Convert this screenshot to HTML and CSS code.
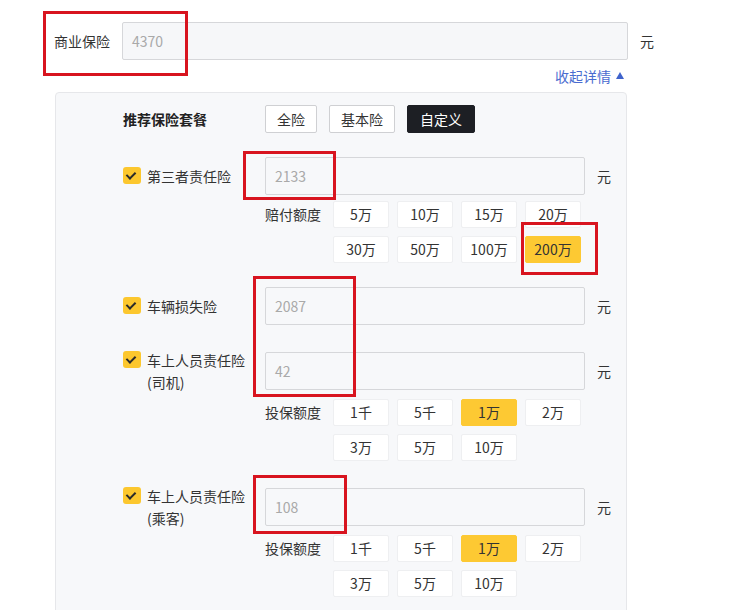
FILE: index.html
```html
<!DOCTYPE html>
<html lang="zh-CN">
<head>
<meta charset="utf-8">
<title>商业保险</title>
<link rel="stylesheet" href="styles.css">
</head>
<body>
<div class="page">
  <div class="top-row">
    <span class="top-label">商业保险</span>
    <div class="field top-field">4370</div>
    <span class="unit">元</span>
  </div>
  <div class="collapse-row">
    <a class="collapse">收起详情<span class="tri"></span></a>
  </div>
  <div class="panel">
    <div class="head-row">
      <span class="head-title">推荐保险套餐</span>
      <div class="plans">
        <span class="plan">全险</span>
        <span class="plan">基本险</span>
        <span class="plan plan-active">自定义</span>
      </div>
    </div>

    <div class="item">
      <div class="item-row">
        <div class="item-label"><span class="check"></span><span class="label-text">第三者责任险</span></div>
        <div class="field item-field">2133</div>
        <span class="unit">元</span>
      </div>
      <div class="amounts">
        <span class="amount-label">赔付额度</span>
        <div class="amount-grid">
          <span class="amt">5万</span><span class="amt">10万</span><span class="amt">15万</span><span class="amt">20万</span>
          <span class="amt">30万</span><span class="amt">50万</span><span class="amt">100万</span><span class="amt amt-active">200万</span>
        </div>
      </div>
    </div>

    <div class="item">
      <div class="item-row">
        <div class="item-label"><span class="check"></span><span class="label-text">车辆损失险</span></div>
        <div class="field item-field">2087</div>
        <span class="unit">元</span>
      </div>
    </div>

    <div class="item">
      <div class="item-row">
        <div class="item-label"><span class="check"></span><span class="label-text">车上人员责任险<br>(司机)</span></div>
        <div class="field item-field">42</div>
        <span class="unit">元</span>
      </div>
      <div class="amounts">
        <span class="amount-label">投保额度</span>
        <div class="amount-grid">
          <span class="amt">1千</span><span class="amt">5千</span><span class="amt amt-active">1万</span><span class="amt">2万</span>
          <span class="amt">3万</span><span class="amt">5万</span><span class="amt">10万</span>
        </div>
      </div>
    </div>

    <div class="item">
      <div class="item-row">
        <div class="item-label"><span class="check"></span><span class="label-text">车上人员责任险<br>(乘客)</span></div>
        <div class="field item-field">108</div>
        <span class="unit">元</span>
      </div>
      <div class="amounts">
        <span class="amount-label">投保额度</span>
        <div class="amount-grid">
          <span class="amt">1千</span><span class="amt">5千</span><span class="amt amt-active">1万</span><span class="amt">2万</span>
          <span class="amt">3万</span><span class="amt">5万</span><span class="amt">10万</span>
        </div>
      </div>
    </div>
  </div>
</div>

<div class="mark mark-1"></div>
<div class="mark mark-2"></div>
<div class="mark mark-3"></div>
<div class="mark mark-4"></div>
<div class="mark mark-5"></div>
</body>
</html>
```

FILE: styles.css
```css
html, body {
  margin: 0;
  padding: 0;
  background: #ffffff;
}
body {
  position: relative;
  font-family: "Noto Sans CJK SC", "Noto Sans", sans-serif;
  font-size: 14px;
  color: #333333;
  height: 610px;
  overflow: hidden;
}
.page {
  padding: 22px 0 0 54px;
  width: 574px;
}
.top-row {
  display: flex;
  align-items: center;
  height: 38px;
  width: 640px;
}
.top-label {
  flex: none;
  width: 68px;
  line-height: 22px;
}
.field {
  flex: none;
  box-sizing: border-box;
  height: 38px;
  border: 1px solid #d6d7da;
  border-radius: 2px;
  background: #f6f7f9;
  color: #a9a9a9;
  line-height: 36px;
  padding-left: 9px;
}
.top-field {
  width: 506px;
}
.unit {
  flex: none;
  margin-left: 12px;
  line-height: 22px;
}
.collapse-row {
  display: flex;
  justify-content: flex-end;
  padding-right: 4px;
  margin-top: 6px;
  height: 20px;
}
.collapse {
  color: #4a6cd0;
  line-height: 20px;
  display: flex;
  align-items: center;
}
.tri {
  width: 0;
  height: 0;
  border-left: 4px solid transparent;
  border-right: 4px solid transparent;
  border-bottom: 7px solid #3f63cc;
  margin-left: 5px;
  margin-top: -1px;
}
.panel {
  margin-top: 6px;
  margin-left: 1px;
  width: 572px;
  box-sizing: border-box;
  border: 1px solid #e6e7ea;
  border-radius: 4px;
  background: #f7f8fa;
  padding: 12px 0 40px 67px;
}
.head-row {
  display: flex;
  align-items: center;
  height: 28px;
}
.head-title {
  width: 142px;
  font-weight: 700;
  color: #222222;
}
.plans {
  display: flex;
  gap: 12px;
}
.plan {
  box-sizing: border-box;
  height: 28px;
  line-height: 26px;
  padding: 0 11px;
  border: 1px solid #cfd0d3;
  border-radius: 2px;
  background: #ffffff;
  color: #333333;
}
.plan-active {
  background: #1d1f24;
  border-color: #1d1f24;
  color: #ffffff;
  padding: 0 12px;
}
.item {
  margin-top: 24px;
}
.item-row {
  display: flex;
  align-items: center;
}
.item-label {
  flex: none;
  width: 142px;
  display: flex;
  align-items: flex-start;
  line-height: 22px;
}
.check {
  flex: none;
  width: 18px;
  height: 17px;
  margin-top: 2px;
  margin-right: 6px;
  border-radius: 3px;
  background: #fcc72e;
  position: relative;
}
.check::after {
  content: "";
  position: absolute;
  left: 5px;
  top: 3px;
  width: 4px;
  height: 7px;
  border-right: 2px solid #2b2b2b;
  border-bottom: 2px solid #2b2b2b;
  transform: rotate(45deg);
}
.item-field {
  width: 320px;
  background: #f7f8fa;
}
.amounts {
  display: flex;
  align-items: flex-start;
  margin-top: 6px;
  margin-left: 142px;
}
.amount-label {
  width: 68px;
  line-height: 27px;
}
.amount-grid {
  display: grid;
  grid-template-columns: repeat(4, 56px);
  gap: 8px;
}
.amt {
  box-sizing: border-box;
  height: 27px;
  line-height: 25px;
  text-align: center;
  background: #ffffff;
  border: 1px solid #eeeff1;
  border-radius: 2px;
  color: #333333;
}
.amt-active {
  background: #fdc933;
  border-color: #fdc933;
}
.mark {
  position: absolute;
  box-sizing: border-box;
  border: 3px solid #d8141f;
}
.mark-1 { left: 43px; top: 11px; width: 145px; height: 65px; }
.mark-2 { left: 243px; top: 151px; width: 93px; height: 49px; }
.mark-3 { left: 521px; top: 222px; width: 77px; height: 53px; }
.mark-4 { left: 253px; top: 276px; width: 103px; height: 121px; }
.mark-5 { left: 253px; top: 475px; width: 94px; height: 59px; }
```
